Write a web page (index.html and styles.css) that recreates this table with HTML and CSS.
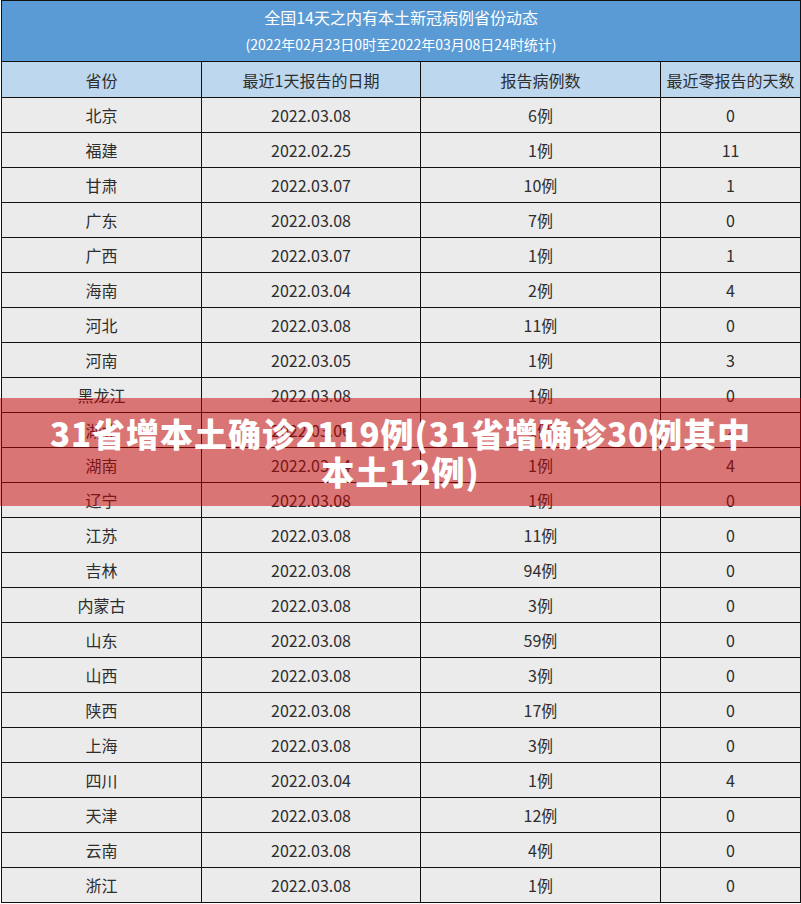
FILE: index.html
```html
<!DOCTYPE html>
<html lang="zh">
<head>
<meta charset="utf-8">
<title>全国14天之内有本土新冠病例省份动态</title>
<link rel="stylesheet" href="styles.css">
</head>
<body>
<div class="page">
<table class="grid">
<colgroup><col class="c1"><col class="c2"><col class="c3"><col class="c4"></colgroup>
<thead>
<tr class="title"><td colspan="4"><div class="t1">全国14天之内有本土新冠病例省份动态</div><div class="t2">(2022年02月23日0时至2022年03月08日24时统计)</div></td></tr>
<tr class="head"><td>省份</td><td>最近1天报告的日期</td><td>报告病例数</td><td>最近零报告的天数</td></tr>
</thead>
<tbody>
<tr><td>北京</td><td>2022.03.08</td><td>6例</td><td>0</td></tr>
<tr><td>福建</td><td>2022.02.25</td><td>1例</td><td>11</td></tr>
<tr><td>甘肃</td><td>2022.03.07</td><td>10例</td><td>1</td></tr>
<tr><td>广东</td><td>2022.03.08</td><td>7例</td><td>0</td></tr>
<tr><td>广西</td><td>2022.03.07</td><td>1例</td><td>1</td></tr>
<tr><td>海南</td><td>2022.03.04</td><td>2例</td><td>4</td></tr>
<tr><td>河北</td><td>2022.03.08</td><td>11例</td><td>0</td></tr>
<tr><td>河南</td><td>2022.03.05</td><td>1例</td><td>3</td></tr>
<tr><td>黑龙江</td><td>2022.03.08</td><td>1例</td><td>0</td></tr>
<tr><td>湖北</td><td>2022.03.06</td><td>1例</td><td>2</td></tr>
<tr><td>湖南</td><td>2022.03.04</td><td>1例</td><td>4</td></tr>
<tr><td>辽宁</td><td>2022.03.08</td><td>1例</td><td>0</td></tr>
<tr><td>江苏</td><td>2022.03.08</td><td>11例</td><td>0</td></tr>
<tr><td>吉林</td><td>2022.03.08</td><td>94例</td><td>0</td></tr>
<tr><td>内蒙古</td><td>2022.03.08</td><td>3例</td><td>0</td></tr>
<tr><td>山东</td><td>2022.03.08</td><td>59例</td><td>0</td></tr>
<tr><td>山西</td><td>2022.03.08</td><td>3例</td><td>0</td></tr>
<tr><td>陕西</td><td>2022.03.08</td><td>17例</td><td>0</td></tr>
<tr><td>上海</td><td>2022.03.08</td><td>3例</td><td>0</td></tr>
<tr><td>四川</td><td>2022.03.04</td><td>1例</td><td>4</td></tr>
<tr><td>天津</td><td>2022.03.08</td><td>12例</td><td>0</td></tr>
<tr><td>云南</td><td>2022.03.08</td><td>4例</td><td>0</td></tr>
<tr><td>浙江</td><td>2022.03.08</td><td>1例</td><td>0</td></tr>
</tbody>
</table>
<div class="banner"><h1 class="banner-text">31省增本土确诊2119例(31省增确诊30例其中本土12例)</h1></div>
</div>
</body>
</html>
```
FILE: styles.css
```css
html, body { margin: 0; padding: 0; background: #ffffff; }
body { font-family: "Noto Sans CJK SC", "Noto Sans", sans-serif; color: #2e2e2e; }
.page { position: relative; width: 801px; height: 904px; overflow: hidden; }
.grid {
  border-collapse: collapse;
  table-layout: fixed;
  width: 799px;
  margin-left: 1px;
  font-size: 16px;
}
.c1 { width: 200px; }
.c2 { width: 219px; }
.c3 { width: 240px; }
.c4 { width: 140px; }
.grid td {
  border: 1px solid #111111;
  padding: 0;
  text-align: center;
  height: 34px;
  line-height: 20px;
  background: #ebebeb;
  white-space: nowrap;
}
.title td {
  background: #5b9bd5;
  color: #ffffff;
  height: 60px;
}
.t1 { font-size: 16px; line-height: 20px; margin-bottom: 8px; margin-top: -2px; }
.t2 { font-size: 14px; line-height: 18px; }
.head td { background: #bdd7ee; height: 35px; }
.banner {
  position: absolute;
  left: 0;
  top: 398px;
  width: 801px;
  height: 108px;
  background: rgba(200, 0, 0, 0.5);
  display: flex;
  align-items: center;
  justify-content: center;
}
.banner-text {
  margin: 0;
  width: 708px;
  text-align: center;
  color: #ffffff;
  font-size: 33px;
  font-weight: 900;
  line-height: 38px;
  letter-spacing: 1px;
}
```
